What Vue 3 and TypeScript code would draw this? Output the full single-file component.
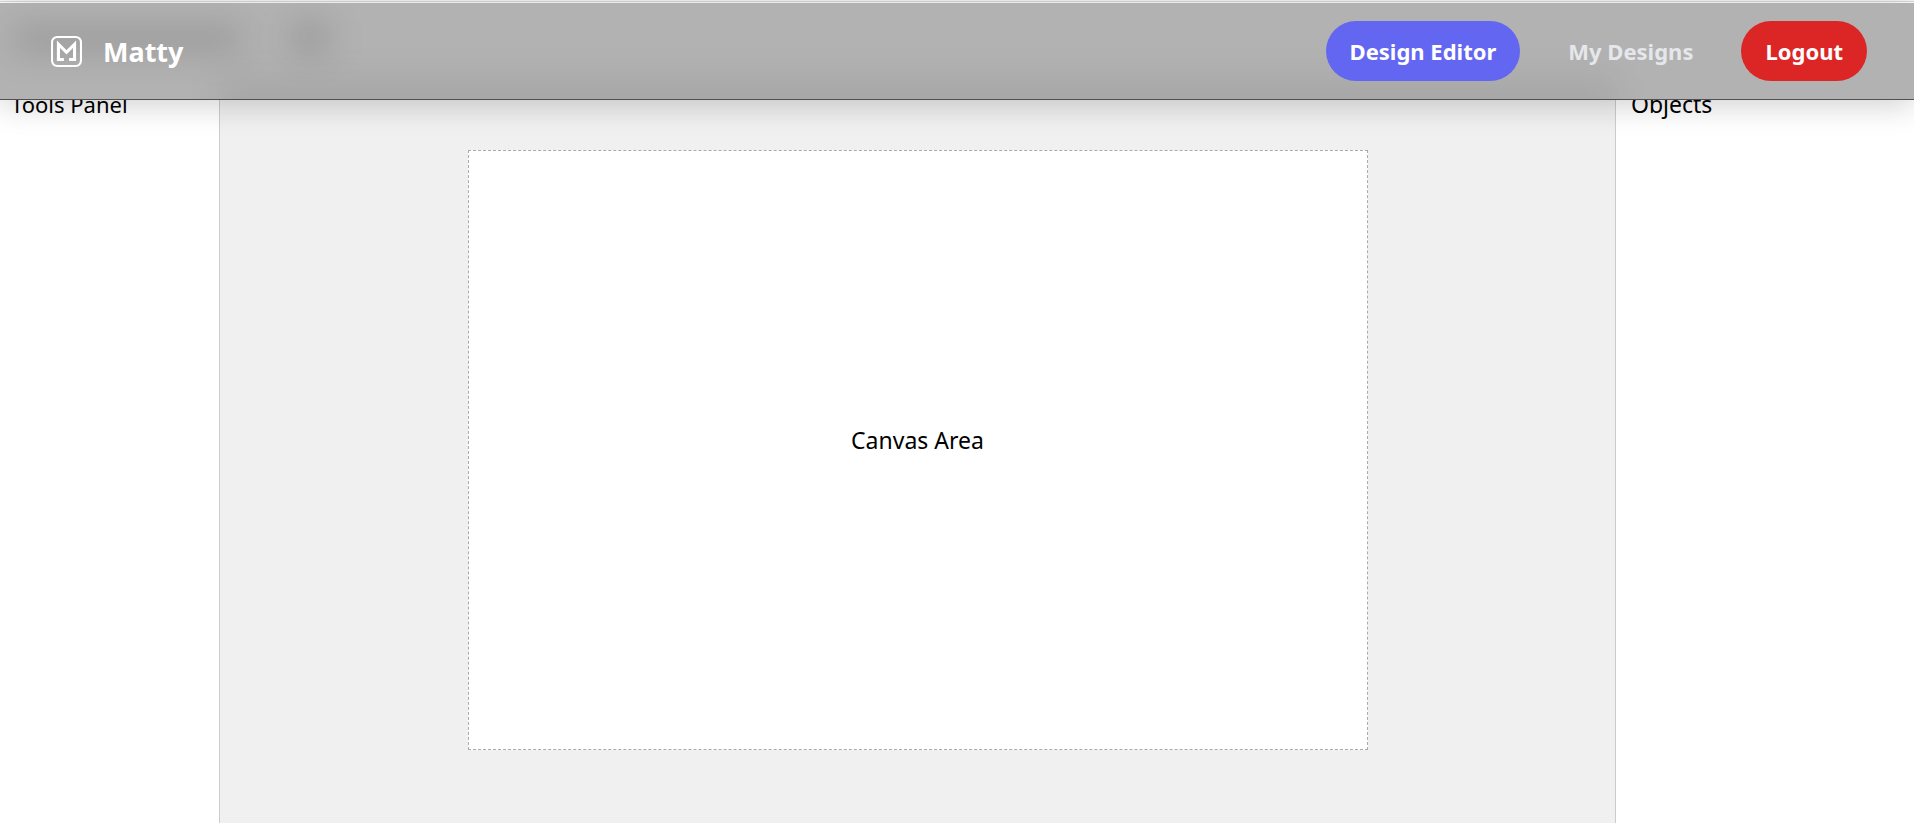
<script setup lang="ts">
import { ref } from 'vue'

const active = ref<string>('Design Editor')
const links: string[] = ['Design Editor', 'My Designs']
</script>

<template>
  <div class="page">
    <div class="topline"></div>
    <header class="nav">
      <div class="glass" aria-hidden="true">
        <span class="haze title"></span>
        <span class="haze count"></span>
        <span class="haze floor"></span>
      </div>
      <a class="brand" href="#">
        <svg class="logo" viewBox="0 0 30 30" fill="none" stroke="currentColor" aria-hidden="true">
          <rect x="1" y="1" width="28" height="28" rx="5" stroke-width="2" />
          <path d="M12.5 22.7H7.2V8L15 15.8L22.8 8V22.7H17.5" stroke-width="3" />
        </svg>
        <span class="name">Matty</span>
      </a>
      <nav class="links">
        <a
          v-for="link in links"
          :key="link"
          href="#"
          class="link"
          :class="{ active: link === active }"
          @click.prevent="active = link"
        >{{ link }}</a>
        <button type="button" class="logout">Logout</button>
      </nav>
    </header>

    <div class="editor">
      <aside class="panel tools">Tools Panel</aside>
      <main class="stage">
        <div class="canvas">Canvas Area</div>
      </main>
      <aside class="panel objects">Objects</aside>
    </div>
  </div>
</template>

<style>
body {
  margin: 0;
  background: #fff;
}
</style>

<style scoped>
.page {
  display: flex;
  flex-direction: column;
  min-height: 100vh;
  position: relative;
  overflow: hidden;
  font-family: "Segoe UI", "Noto Sans", "Open Sans", sans-serif;
  font-size: 23px;
  line-height: 32px;
  color: #000;
}
.topline {
  height: 1px;
  border-top: 1px solid #f8f8f8;
  background: #dcdcdc;
}
.nav {
  position: absolute;
  top: 3px;
  left: 0;
  right: 0;
  z-index: 2;
  display: flex;
  align-items: center;
  justify-content: space-between;
  box-sizing: border-box;
  height: 97px;
  padding: 0 47px 0 51px;
  background: #b2b2b2;
  border-bottom: 1px solid #505050;
  box-shadow: 0 4px 30px rgba(0, 0, 0, 0.2);
}
.glass {
  position: absolute;
  inset: 0;
  overflow: hidden;
}
.haze {
  position: absolute;
  filter: blur(16px);
}
.haze.title {
  left: 12px;
  top: 20px;
  width: 230px;
  height: 32px;
  background: rgba(0, 0, 0, 0.11);
}
.haze.count {
  left: 290px;
  top: 18px;
  width: 40px;
  height: 34px;
  background: rgba(0, 0, 0, 0.12);
}
.haze.floor {
  left: 220px;
  right: 299px;
  top: 74px;
  height: 80px;
  background: rgba(0, 0, 0, 0.06);
}
.brand {
  position: relative;
  display: flex;
  align-items: center;
  gap: 21px;
  color: #fff;
  font-size: 27px;
  font-weight: 700;
  text-decoration: none;
}
.name {
  padding-top: 2px;
}
.logo {
  width: 31px;
  height: 31px;
}
.links {
  position: relative;
  display: flex;
  align-items: center;
  gap: 24px;
}
.link,
.logout {
  padding: 14px 24px;
  border: 0;
  border-radius: 30px;
  font: inherit;
  font-size: 22px;
  font-weight: 700;
  color: #e5e7eb;
  text-decoration: none;
}
.link.active {
  background: #6366f1;
  color: #fff;
}
.logout {
  background: #dc2626;
  color: #fff;
  cursor: pointer;
}
.editor {
  flex: 1;
  display: flex;
  padding-top: 74px;
}
.panel {
  box-sizing: border-box;
  padding: 12px 16px;
  background: #fff;
}
.tools {
  width: 220px;
  padding-left: 11px;
  font-size: 22px;
  border-right: 1px solid #ccc;
}
.objects {
  width: 299px;
  padding-left: 15px;
  border-left: 1px solid #ccc;
}
.stage {
  flex: 1;
  display: flex;
  align-items: center;
  justify-content: center;
  background: #f0f0f0;
}
.canvas {
  display: flex;
  align-items: center;
  justify-content: center;
  box-sizing: border-box;
  width: 900px;
  height: 600px;
  padding-bottom: 20px;
  background: #fff;
  border: 1px dashed #aaa;
}
</style>
